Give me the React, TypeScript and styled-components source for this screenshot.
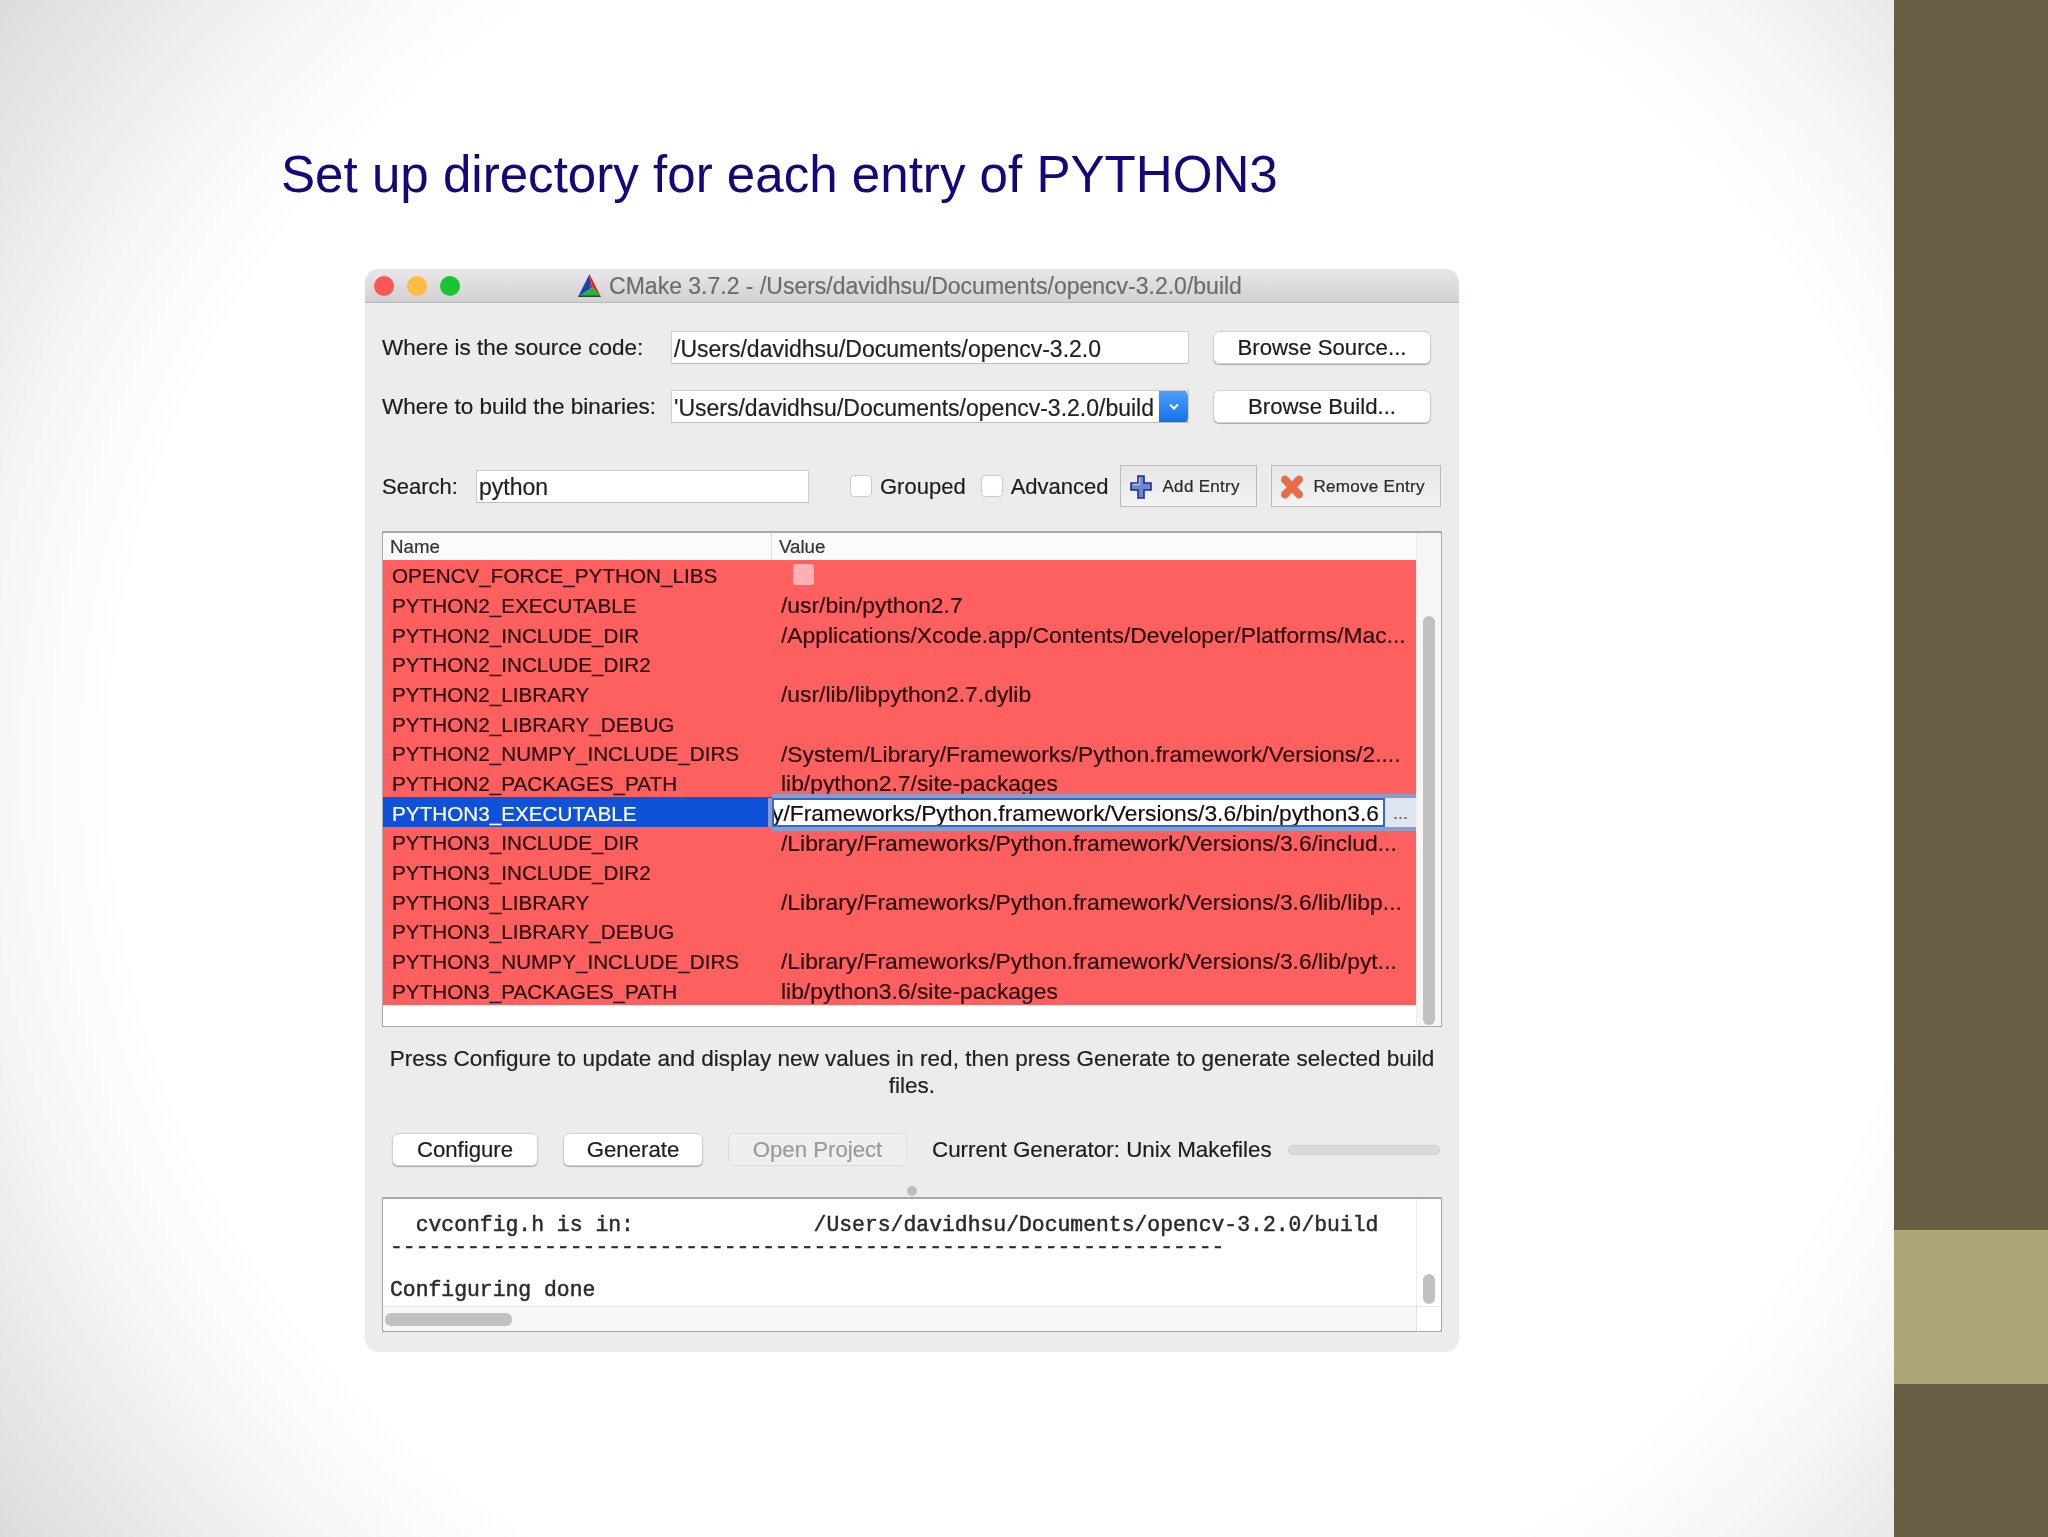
import React from "react";
import styled, { createGlobalStyle } from "styled-components";

const Global = createGlobalStyle`
    html, body {
        margin: 0;
        padding: 0;
        background: #fff;
    }
    body {
        font-family: "Liberation Sans", Arial, sans-serif;
    }
`;

const Slide = styled.div`
    width: 2048px;
    height: 1537px;
    display: grid;
    grid-template-columns: 1894px 154px;
    overflow: hidden;
    background: radial-gradient(circle 1280px at 1024px 768px, #fff 71%, #f7f7f7 80%, #ebebeb 89%, #dcdcdc 100%);
`;

const Main = styled.div`
    padding: 145px 0 0 281px;
`;

const Title = styled.h1`
    margin: 0;
    font-size: 51.1px;
    line-height: 60px;
    font-weight: 400;
    color: #15067a;
    white-space: nowrap;
`;

const SidePanel = styled.div`
    display: flex;
    flex-direction: column;
    background: #695e44;
`;

const SideBlock = styled.div`
    margin-top: 1230px;
    height: 154px;
    background: #aba577;
`;

const Window = styled.div`
    width: 1094px;
    height: 1083px;
    margin: 64px 0 0 84px;
    background: #ececec;
    border-radius: 14px;
    overflow: hidden;
    color: #1d1d1d;
    filter: blur(0.45px);
    -webkit-text-stroke: 0.2px currentColor;
`;

const TitleBar = styled.div`
    position: relative;
    height: 34px;
    box-sizing: border-box;
    padding: 1px 4px 0 0;
    display: flex;
    align-items: center;
    justify-content: center;
    gap: 8px;
    background: linear-gradient(#e9e7e9, #d2d0d2);
    border-bottom: 1px solid #b9b9b9;
    color: #6d6d6d;
    font-size: 23px;
`;

const Lights = styled.div`
    position: absolute;
    left: 9px;
    top: 7px;
    display: flex;
    gap: 13px;
`;

const Light = styled.span<{ $color: string }>`
    width: 20px;
    height: 20px;
    border-radius: 50%;
    background: ${(p) => p.$color};
`;

const Body = styled.div`
    padding: 28px 17px 20px;
    display: flex;
    flex-direction: column;
`;

const PathRow = styled.div<{ $top?: number }>`
    display: grid;
    grid-template-columns: 289px 518px 24px 218px;
    height: 33px;
    margin-top: ${(p) => p.$top ?? 0}px;
    align-items: center;
    font-size: 22.5px;
`;

const PathLabel = styled.span`
    padding-top: 1px;
`;

const Spacer = styled.span``;

const Field = styled.div`
    height: 33px;
    box-sizing: border-box;
    background: #fff;
    border: 1px solid #cfcfcf;
    border-bottom-color: #bdbdbd;
    padding: 3px 0 0 2px;
    display: flex;
    align-items: center;
    justify-content: space-between;
    overflow: hidden;
    white-space: nowrap;
    font-size: 23px;
    color: #222;
`;

const ComboArrow = styled.span`
    width: 29px;
    height: 34px;
    margin-top: -3px;
    flex: none;
    display: flex;
    align-items: center;
    justify-content: center;
    background: linear-gradient(#4ea1fb, #0e6deb);
    border-radius: 0 6px 6px 0;
`;

const MacButton = styled.div<{ $width: number; $disabled?: boolean }>`
    width: ${(p) => p.$width}px;
    height: 33px;
    box-sizing: border-box;
    padding-top: 1px;
    display: flex;
    align-items: center;
    justify-content: center;
    background: ${(p) => (p.$disabled ? "#efefef" : "#fff")};
    border: 1px solid ${(p) => (p.$disabled ? "#dcdcdc" : "#d2d2d2")};
    border-radius: 6px;
    box-shadow: ${(p) => (p.$disabled ? "none" : "0 1px 1px #a9a9a9")};
    color: ${(p) => (p.$disabled ? "#9a9a9a" : "#1d1d1d")};
    font-size: 22.2px;
`;

const SearchRow = styled.div`
    height: 42px;
    margin-top: 42px;
    display: flex;
    align-items: center;
    font-size: 22px;
`;

const SearchLabel = styled.span`
    width: 94px;
    padding-top: 2px;
`;

const SearchField = styled(Field)`
    width: 333px;
`;

const Check = styled.span<{ $left: number }>`
    width: 22px;
    height: 22px;
    margin-left: ${(p) => p.$left}px;
    margin-right: 8px;
    box-sizing: border-box;
    background: #fff;
    border: 1px solid #cdcdcd;
    border-radius: 4px;
`;

const CheckLabel = styled.span`
    padding-top: 2px;
`;

const ToolButton = styled.div<{ $width: number; $left: number }>`
    width: ${(p) => p.$width}px;
    height: 42px;
    margin-left: ${(p) => p.$left}px;
    box-sizing: border-box;
    display: flex;
    align-items: center;
    gap: 10px;
    padding: 1px 0 0 9px;
    background: linear-gradient(#e6e6e6, #f3f3f3);
    border: 1px solid #bcbcbc;
    font-size: 17px;
    letter-spacing: 0.3px;
    color: #2a2a2a;
`;

const Table = styled.div`
    height: 496px;
    margin-top: 24px;
    box-sizing: border-box;
    display: grid;
    grid-template-columns: 1fr 25px;
    background: #fff;
    border: 1px solid #a9a9a9;
    border-top-width: 2px;
`;

const TableMain = styled.div`
    display: flex;
    flex-direction: column;
`;

const TableHead = styled.div`
    height: 27px;
    display: grid;
    grid-template-columns: 388px 1fr;
    align-items: center;
    background: #fbfbfb;
    font-size: 18.7px;
    color: #333;
`;

const HeadCell = styled.div<{ $divided?: boolean }>`
    height: 100%;
    display: flex;
    align-items: center;
    padding-left: 7px;
    border-left: ${(p) => (p.$divided ? "1px solid #dedede" : "none")};
`;

const Row = styled.div<{ $selected?: boolean }>`
    height: 29.67px;
    display: grid;
    grid-template-columns: 388px 1fr;
    align-items: center;
    background: ${(p) => (p.$selected ? "#0f52d8" : "#fe5f5f")};
    color: ${(p) => (p.$selected ? "#fff" : "#2a0b0b")};
    white-space: nowrap;
`;

const NameCell = styled.div`
    padding: 3px 0 0 9px;
    font-size: 20.7px;
`;

const ValueCell = styled.div`
    padding: 3px 0 0 10px;
    display: flex;
    align-items: center;
    font-size: 22.85px;
    line-height: 25px;
`;

const BoolBox = styled.span`
    width: 21px;
    height: 21px;
    margin: -3px 0 0 12px;
    border-radius: 3px;
    background: #ffb0b2;
`;

const Editor = styled.div`
    position: relative;
    z-index: 1;
    height: 29px;
    margin-left: 1px;
    display: flex;
    background: #dfe5f1;
    box-shadow: 0 -4px 0 #8a9ccc, 0 4px 0 #8a9ccc, -4px 0 0 #8a9ccc;
`;

const EditorInput = styled.div`
    width: 613px;
    box-sizing: border-box;
    overflow: hidden;
    direction: rtl;
    display: flex;
    align-items: center;
    padding: 2px 4px 0;
    background: #fff;
    border: 2px solid #3568c0;
    color: #111;
    font-size: 22.75px;
    white-space: nowrap;
`;

const EditorMore = styled.div`
    flex: 1;
    padding-top: 5px;
    text-align: center;
    font-size: 18px;
    color: #666;
`;

const TrackV = styled.div<{ $top: number }>`
    display: flex;
    justify-content: center;
    padding: ${(p) => p.$top}px 0 1px;
    background: #f6f6f6;
    border-left: 1px solid #ececec;
`;

const ThumbV = styled.div<{ $height?: number }>`
    width: 12px;
    height: ${(p) => (p.$height ? `${p.$height}px` : "100%")};
    border-radius: 6px;
    background: #c1c1c1;
`;

const Message = styled.p`
    margin: 18px 0 0;
    font-size: 22.5px;
    line-height: 27px;
    text-align: center;
    color: #222;
`;

const ActionRow = styled.div`
    height: 33px;
    margin-top: 34px;
    padding-left: 10px;
    display: flex;
    align-items: center;
    gap: 25px;
    font-size: 22.4px;
`;

const Progress = styled.div`
    width: 152px;
    height: 10px;
    margin-left: -9px;
    box-sizing: border-box;
    background: #d9d9d9;
    border: 1px solid #cecece;
    border-radius: 5px;
`;

const SplitDot = styled.div`
    width: 10px;
    height: 10px;
    margin: 20px auto 1px;
    border-radius: 50%;
    background: #bdbdbd;
`;

const LogBox = styled.div`
    height: 135px;
    box-sizing: border-box;
    display: grid;
    grid-template-columns: 1fr 25px;
    grid-template-rows: 1fr 25px;
    background: #fff;
    border: 1px solid #a9a9a9;
    border-top-width: 2px;
`;

const LogText = styled.pre`
    margin: 0;
    padding: 16px 0 0 7px;
    overflow: hidden;
    font-family: "Liberation Mono", "Courier New", monospace;
    font-size: 21.4px;
    line-height: 21.5px;
    font-weight: 400;
    -webkit-text-stroke: 0.5px #2b2b2b;
    color: #2b2b2b;
`;

const LogVTrack = styled(TrackV)`
    align-items: flex-end;
    padding: 0 0 2px;
    background: #fff;
`;

const TrackH = styled.div`
    padding: 6px 2px;
    background: #f8f8f8;
    border-top: 1px solid #e8e8e8;
`;

const ThumbH = styled.div`
    width: 127px;
    height: 13px;
    border-radius: 6px;
    background: #c1c1c1;
`;

const Corner = styled.div`
    background: #fff;
    border-top: 1px solid #e8e8e8;
    border-left: 1px solid #e0e0e0;
`;

const rows: [string, string][] = [
    ["OPENCV_FORCE_PYTHON_LIBS", "__bool"],
    ["PYTHON2_EXECUTABLE", "/usr/bin/python2.7"],
    ["PYTHON2_INCLUDE_DIR", "/Applications/Xcode.app/Contents/Developer/Platforms/Mac..."],
    ["PYTHON2_INCLUDE_DIR2", ""],
    ["PYTHON2_LIBRARY", "/usr/lib/libpython2.7.dylib"],
    ["PYTHON2_LIBRARY_DEBUG", ""],
    ["PYTHON2_NUMPY_INCLUDE_DIRS", "/System/Library/Frameworks/Python.framework/Versions/2...."],
    ["PYTHON2_PACKAGES_PATH", "lib/python2.7/site-packages"],
    ["PYTHON3_EXECUTABLE", "__edit"],
    ["PYTHON3_INCLUDE_DIR", "/Library/Frameworks/Python.framework/Versions/3.6/includ..."],
    ["PYTHON3_INCLUDE_DIR2", ""],
    ["PYTHON3_LIBRARY", "/Library/Frameworks/Python.framework/Versions/3.6/lib/libp..."],
    ["PYTHON3_LIBRARY_DEBUG", ""],
    ["PYTHON3_NUMPY_INCLUDE_DIRS", "/Library/Frameworks/Python.framework/Versions/3.6/lib/pyt..."],
    ["PYTHON3_PACKAGES_PATH", "lib/python3.6/site-packages"],
];

const CmakeLogo = () => (
    <svg width="23" height="24" viewBox="0 0 22 23">
        <polygon points="11,0 14,13 12,14" fill="#d8232a" />
        <polygon points="11,0 22,22 14,13" fill="#e0252a" />
        <polygon points="11,0 12,14 0,22" fill="#1b3fb5" />
        <polygon points="0,22 12,14 14,13 22,22" fill="#27b43c" />
        <polygon points="0,22 22,22 21,20.5 1,20.5" fill="#17222e" opacity="0.7" />
    </svg>
);

const PlusIcon = () => (
    <svg width="22" height="24" viewBox="0 0 22 24">
        <path
            d="M8 1h6v7h7v7h-7v8H8v-8H1V8h7z"
            fill="#6f86d6"
            stroke="#1e2f8a"
            strokeWidth="1.6"
        />
        <path d="M9.5 3v6.5H3" fill="none" stroke="#b3c2f0" strokeWidth="1.4" />
    </svg>
);

const CrossIcon = () => (
    <svg width="22" height="24" viewBox="0 0 22 24">
        <path d="M4 4.5l14 15M18 4.5l-14 15" stroke="#b09a84" strokeWidth="8.2" strokeLinecap="round" />
        <path d="M4 4.5l14 15M18 4.5l-14 15" stroke="#ee6a45" strokeWidth="6.6" strokeLinecap="round" />
    </svg>
);

const Chevron = () => (
    <svg width="12" height="8" viewBox="0 0 12 8">
        <path d="M2 1.5l4 4 4-4" fill="none" stroke="#fff" strokeWidth="2" />
    </svg>
);

export default function App() {
    return (
        <Slide>
            <Global />
            <Main>
                <Title>Set up directory for each entry of PYTHON3</Title>
                <Window>
                    <TitleBar>
                        <Lights>
                            <Light $color="#fc5753" />
                            <Light $color="#fdbc40" />
                            <Light $color="#19c332" />
                        </Lights>
                        <CmakeLogo />
                        CMake 3.7.2 - /Users/davidhsu/Documents/opencv-3.2.0/build
                    </TitleBar>
                    <Body>
                        <PathRow>
                            <PathLabel>Where is the source code:</PathLabel>
                            <Field>/Users/davidhsu/Documents/opencv-3.2.0</Field>
                            <Spacer />
                            <MacButton $width={218}>Browse Source...</MacButton>
                        </PathRow>
                        <PathRow $top={26}>
                            <PathLabel>Where to build the binaries:</PathLabel>
                            <Field>
                                'Users/davidhsu/Documents/opencv-3.2.0/build
                                <ComboArrow>
                                    <Chevron />
                                </ComboArrow>
                            </Field>
                            <Spacer />
                            <MacButton $width={218}>Browse Build...</MacButton>
                        </PathRow>
                        <SearchRow>
                            <SearchLabel>Search:</SearchLabel>
                            <SearchField>python</SearchField>
                            <Check $left={41} />
                            <CheckLabel>Grouped</CheckLabel>
                            <Check $left={15} />
                            <CheckLabel>Advanced</CheckLabel>
                            <ToolButton $width={137} $left={12}>
                                <PlusIcon />
                                Add Entry
                            </ToolButton>
                            <ToolButton $width={170} $left={14}>
                                <CrossIcon />
                                Remove Entry
                            </ToolButton>
                        </SearchRow>
                        <Table>
                            <TableMain>
                                <TableHead>
                                    <HeadCell>Name</HeadCell>
                                    <HeadCell $divided>Value</HeadCell>
                                </TableHead>
                                {rows.map(([name, value]) => (
                                    <Row key={name} $selected={value === "__edit"}>
                                        <NameCell>{name}</NameCell>
                                        {value === "__edit" ? (
                                            <Editor>
                                                <EditorInput>
                                                    <bdi>/Library/Frameworks/Python.framework/Versions/3.6/bin/python3.6</bdi>
                                                </EditorInput>
                                                <EditorMore>...</EditorMore>
                                            </Editor>
                                        ) : (
                                            <ValueCell>
                                                {value === "__bool" ? <BoolBox /> : value}
                                            </ValueCell>
                                        )}
                                    </Row>
                                ))}
                            </TableMain>
                            <TrackV $top={83}>
                                <ThumbV />
                            </TrackV>
                        </Table>
                        <Message>
                            Press Configure to update and display new values in red, then press Generate to generate selected build files.
                        </Message>
                        <ActionRow>
                            <MacButton $width={146}>Configure</MacButton>
                            <MacButton $width={140}>Generate</MacButton>
                            <MacButton $width={179} $disabled>Open Project</MacButton>
                            <span>Current Generator: Unix Makefiles</span>
                            <Progress />
                        </ActionRow>
                        <SplitDot />
                        <LogBox>
                            <LogText>{`  cvconfig.h is in:              /Users/davidhsu/Documents/opencv-3.2.0/build
${"-".repeat(65)}

Configuring done`}</LogText>
                            <LogVTrack $top={0}>
                                <ThumbV $height={30} />
                            </LogVTrack>
                            <TrackH>
                                <ThumbH />
                            </TrackH>
                            <Corner />
                        </LogBox>
                    </Body>
                </Window>
            </Main>
            <SidePanel>
                <SideBlock />
            </SidePanel>
        </Slide>
    );
}
